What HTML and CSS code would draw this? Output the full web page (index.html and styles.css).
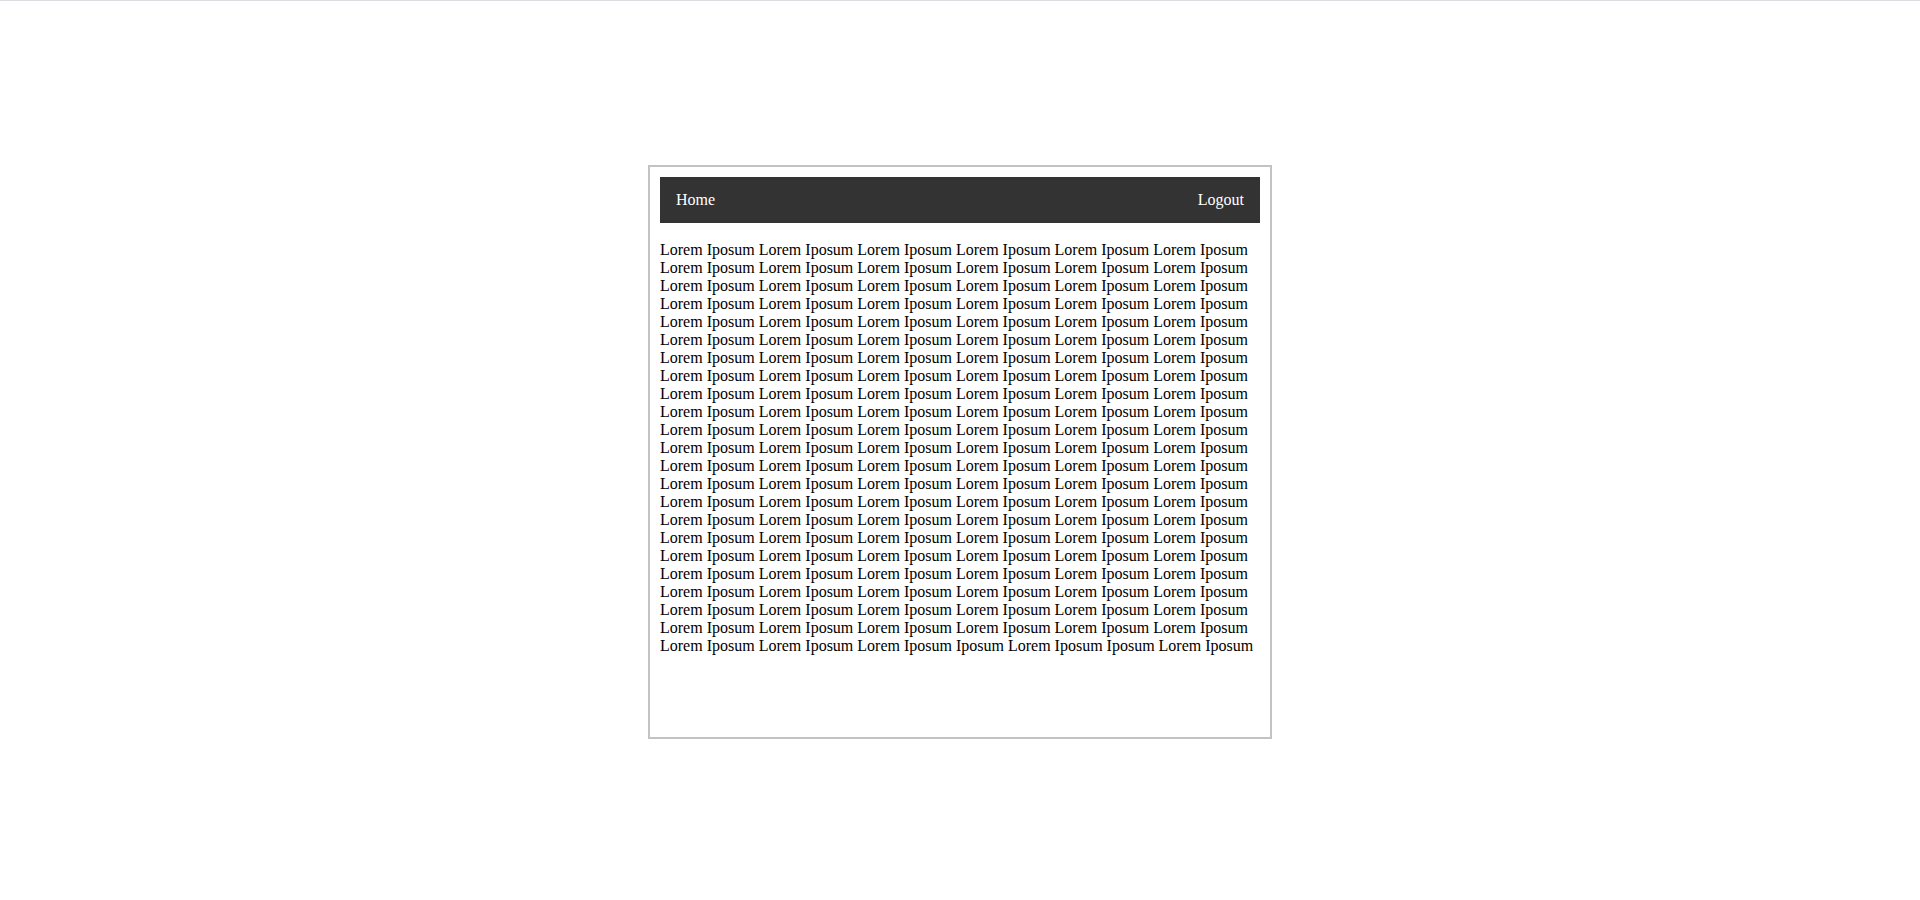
FILE: index.html
```html
<!DOCTYPE html>
<html>
<head>
<meta charset="utf-8">
<link rel="stylesheet" href="styles.css">
</head>
<body>
<div class="topline"></div>
<div class="box">
  <nav class="nav">
    <a class="nav-link">Home</a>
    <a class="nav-link">Logout</a>
  </nav>
  <p class="content">
Lorem Iposum Lorem Iposum Lorem Iposum Lorem Iposum Lorem Iposum Lorem Iposum
Lorem Iposum Lorem Iposum Lorem Iposum Lorem Iposum Lorem Iposum Lorem Iposum
Lorem Iposum Lorem Iposum Lorem Iposum Lorem Iposum Lorem Iposum Lorem Iposum
Lorem Iposum Lorem Iposum Lorem Iposum Lorem Iposum Lorem Iposum Lorem Iposum
Lorem Iposum Lorem Iposum Lorem Iposum Lorem Iposum Lorem Iposum Lorem Iposum
Lorem Iposum Lorem Iposum Lorem Iposum Lorem Iposum Lorem Iposum Lorem Iposum
Lorem Iposum Lorem Iposum Lorem Iposum Lorem Iposum Lorem Iposum Lorem Iposum
Lorem Iposum Lorem Iposum Lorem Iposum Lorem Iposum Lorem Iposum Lorem Iposum
Lorem Iposum Lorem Iposum Lorem Iposum Lorem Iposum Lorem Iposum Lorem Iposum
Lorem Iposum Lorem Iposum Lorem Iposum Lorem Iposum Lorem Iposum Lorem Iposum
Lorem Iposum Lorem Iposum Lorem Iposum Lorem Iposum Lorem Iposum Lorem Iposum
Lorem Iposum Lorem Iposum Lorem Iposum Lorem Iposum Lorem Iposum Lorem Iposum
Lorem Iposum Lorem Iposum Lorem Iposum Lorem Iposum Lorem Iposum Lorem Iposum
Lorem Iposum Lorem Iposum Lorem Iposum Lorem Iposum Lorem Iposum Lorem Iposum
Lorem Iposum Lorem Iposum Lorem Iposum Lorem Iposum Lorem Iposum Lorem Iposum
Lorem Iposum Lorem Iposum Lorem Iposum Lorem Iposum Lorem Iposum Lorem Iposum
Lorem Iposum Lorem Iposum Lorem Iposum Lorem Iposum Lorem Iposum Lorem Iposum
Lorem Iposum Lorem Iposum Lorem Iposum Lorem Iposum Lorem Iposum Lorem Iposum
Lorem Iposum Lorem Iposum Lorem Iposum Lorem Iposum Lorem Iposum Lorem Iposum
Lorem Iposum Lorem Iposum Lorem Iposum Lorem Iposum Lorem Iposum Lorem Iposum
Lorem Iposum Lorem Iposum Lorem Iposum Lorem Iposum Lorem Iposum Lorem Iposum
Lorem Iposum Lorem Iposum Lorem Iposum Lorem Iposum Lorem Iposum Lorem Iposum
Lorem Iposum Lorem Iposum Lorem Iposum Iposum Lorem Iposum Iposum Lorem Iposum
  </p>
</div>
</body>
</html>
```

FILE: styles.css
```css
html, body {
  margin: 0;
  padding: 0;
  background: #ffffff;
}

body {
  font-family: "Liberation Serif", "Times New Roman", serif;
  font-size: 16px;
  color: #000000;
}

.topline {
  height: 1px;
  background: #dcdce0;
}

.box {
  width: 600px;
  height: 550px;
  margin: 164px auto 0;
  padding: 10px;
  border: 2px solid #c3c3c3;
}

.nav {
  display: flex;
  justify-content: space-between;
  align-items: center;
  background: #333333;
  padding: 14px 16px;
}

.nav-link {
  color: #ffffff;
  text-decoration: none;
}

.content {
  margin: 18px 0 0;
}
```
